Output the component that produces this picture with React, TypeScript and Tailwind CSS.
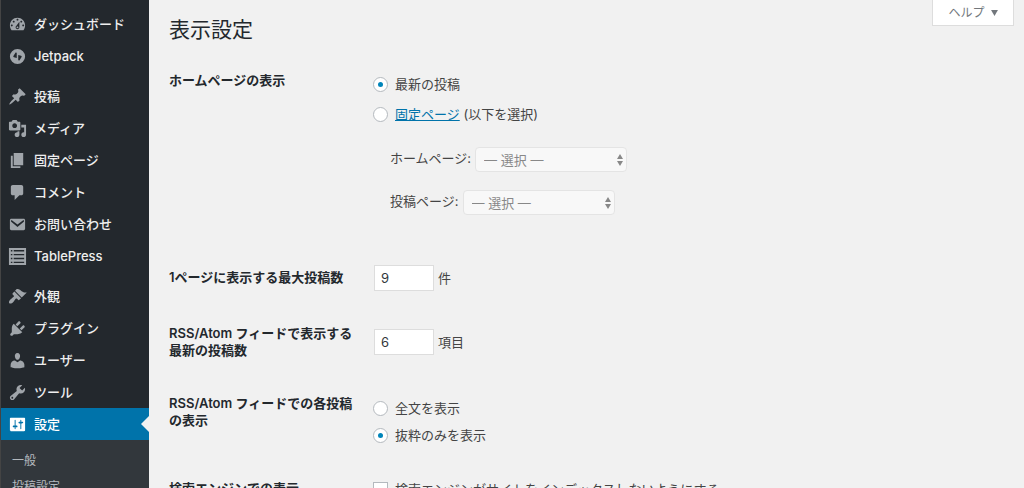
import React from "react";

interface MenuItem {
  label: string;
  icon: string;
  current?: boolean;
}

const MENU_GROUPS: MenuItem[][] = [
  [
    {
      label: "ダッシュボード",
      icon: "M3.76 16h12.48c1.1-1.37 1.76-3.11 1.76-5 0-4.42-3.58-8-8-8s-8 3.58-8 8c0 1.89.66 3.63 1.76 5zM10 4c.55 0 1 .45 1 1s-.45 1-1 1-1-.45-1-1 .45-1 1-1zM6 6c.55 0 1 .45 1 1s-.45 1-1 1-1-.45-1-1 .45-1 1-1zm8 0c.55 0 1 .45 1 1s-.45 1-1 1-1-.45-1-1 .45-1 1-1zm-5.37 5.55L12 7v6c0 1.1-.9 2-2 2s-2-.9-2-2c0-.57.24-1.08.63-1.45zM4 10c.55 0 1 .45 1 1s-.45 1-1 1-1-.45-1-1 .45-1 1-1zm12 0c.55 0 1 .45 1 1s-.45 1-1 1-1-.45-1-1 .45-1 1-1zm-5 3c0-.55-.45-1-1-1s-1 .45-1 1 .45 1 1 1 1-.45 1-1z",
    },
    {
      label: "Jetpack",
      icon: "M10 2a8 8 0 1 0 0 16 8 8 0 0 0 0-16zM9.200 11.700l-2.900-.8c-.7-.2-.9-.8-.6-1.400L8 5.700l1.200.3zM10.800 8.300l2.900.8c.7.2.9.8.6 1.400L12 14.300l-1.200-.3z",
    },
  ],
  [
    {
      label: "投稿",
      icon: "M10.44 3.02l1.82-1.82 6.36 6.35-1.83 1.82c-1.05-.68-2.48-.57-3.41.36l-.75.75c-.92.93-1.04 2.35-.35 3.41l-1.83 1.82-2.41-2.41-2.8 2.79c-.42.42-3.38 2.71-3.8 2.29s1.86-3.39 2.28-3.81l2.79-2.79L4.1 9.36l1.83-1.82c1.05.69 2.48.57 3.4-.36l.75-.75c.93-.92 1.05-2.35.36-3.41z",
    },
    {
      label: "メディア",
      icon: "M13 11V4c0-.55-.45-1-1-1h-1.67L9 1H5L3.67 3H2c-.55 0-1 .45-1 1v7c0 .55.45 1 1 1h10c.55 0 1-.45 1-1zM7 4.5c1.38 0 2.5 1.12 2.5 2.5S8.38 9.5 7 9.5 4.5 8.38 4.5 7 5.62 4.5 7 4.5zM14 6h5v10.5c0 1.38-1.12 2.5-2.5 2.5S14 17.88 14 16.5s1.12-2.5 2.5-2.5c.17 0 .34.02.5.05V9h-3V6zm-4 8.05V13h2v3.5c0 1.38-1.12 2.5-2.5 2.5S7 17.88 7 16.5 8.12 14 9.5 14c.17 0 .34.02.5.05z",
    },
    {
      label: "固定ページ",
      icon: "M6 15V2h10v13H6zm-1 1h8v2H3V5h2v11z",
    },
    {
      label: "コメント",
      icon: "M5 2h9c1.1 0 2 .9 2 2v7c0 1.1-.9 2-2 2h-2l-5 5v-5H5c-1.1 0-2-.9-2-2V4c0-1.1.9-2 2-2z",
    },
    {
      label: "お問い合わせ",
      icon: "M3.5 4h13c.8 0 1.500.7 1.500 1.500v9c0 .8-.7 1.500-1.500 1.500h-13c-.8 0-1.500-.7-1.500-1.500v-9C2 4.700 2.700 4 3.500 4zM10 12.500l6.600-5.500c.4-.4.500-.9.2-1.300-.3-.3-.8-.3-1.200 0L10 10.100 4.400 5.700c-.4-.3-.9-.3-1.200 0-.3.4-.2.9.2 1.300z",
    },
    {
      label: "TablePress",
      icon: "M1 1h18v18H1zM3 3.200v1.500h1.600V3.200zM6 3.200v1.500h11V3.200zM3 7.300v1.500h1.600V7.300zM6 7.300v1.500h11V7.300zM3 11.300v1.500h1.600v-1.500zM6 11.300v1.500h11v-1.500zM3 15.400v1.500h1.600v-1.500zM6 15.400v1.500h11v-1.500z",
    },
  ],
  [
    {
      label: "外観",
      icon: "M14.48 11.06L7.41 3.99l1.5-1.5c.5-.56 2.3-.47 3.51.32 1.21.8 1.43 1.28 2.91 2.1 1.18.64 2.45 1.26 4.45.85zm-.71.71L6.7 4.7 4.93 6.47c-.39.39-.39 1.02 0 1.41l1.06 1.06c.39.39.39 1.03 0 1.42-.6.6-1.43 1.11-2.21 1.69-.35.26-.7.53-1.01.84C1.43 14.23.4 16.08 1.4 17.07c.99 1 2.84-.03 4.18-1.36.31-.31.58-.66.85-1.02.57-.78 1.08-1.61 1.69-2.21.39-.39 1.02-.39 1.41 0l1.06 1.06c.39.39 1.02.39 1.41 0z",
    },
    {
      label: "プラグイン",
      icon: "M13.11 4.36L9.87 7.6 8 5.73l3.24-3.24c.35-.34 1.05-.2 1.56.32.52.51.66 1.21.31 1.55zm-8 1.77l.91-1.12 9.01 9.01-1.19.84c-.71.71-2.63 1.16-3.82 1.16H6.14L4.9 17.26c-.59.59-1.54.59-2.12 0-.59-.58-.59-1.53 0-2.12L4 13.9v-3.88c0-1.13.4-3.19 1.11-3.89zm7.26 3.97l3.24-3.24c.34-.35 1.04-.21 1.55.31.52.51.66 1.21.31 1.55l-3.24 3.25z",
    },
    {
      label: "ユーザー",
      icon: "M10 9.25c-2.27 0-2.73-3.44-2.73-3.44C7 4.02 7.82 2 9.97 2c2.16 0 2.98 2.02 2.71 3.81 0 0-.41 3.44-2.68 3.44zm0 2.57L12.72 10c2.39 0 4.52 2.33 4.52 4.53v2.49s-3.65 1.13-7.24 1.13c-3.65 0-7.24-1.13-7.24-1.13v-2.49c0-2.25 1.94-4.48 4.47-4.48z",
    },
    {
      label: "ツール",
      icon: "M16.68 9.77c-1.34 1.34-3.3 1.67-4.95.99l-5.41 6.52c-.99.99-2.59.99-3.58 0s-.99-2.59 0-3.57l6.52-5.42c-.68-1.65-.35-3.61.99-4.95 1.28-1.28 3.12-1.62 4.72-1.06l-2.89 2.89 2.82 2.82 2.86-2.87c.53 1.58.18 3.39-1.08 4.65zM3.81 16.21c.4.39 1.04.39 1.43 0 .4-.4.4-1.04 0-1.43-.39-.4-1.03-.4-1.43 0-.39.39-.39 1.03 0 1.43z",
    },
    {
      label: "設定",
      current: true,
      icon: "M18 16V4c0-.55-.45-1-1-1H3c-.55 0-1 .45-1 1v12c0 .55.45 1 1 1h14c.55 0 1-.45 1-1zM8 11h1c.55 0 1 .45 1 1s-.45 1-1 1H8v1.5c0 .28-.22.5-.5.5s-.5-.22-.5-.5V13H6c-.55 0-1-.45-1-1s.45-1 1-1h1V5.5c0-.28.22-.5.5-.5s.5.22.5.5V11zm5-2h-1c-.55 0-1-.45-1-1s.45-1 1-1h1V5.5c0-.28.22-.5.5-.5s.5.22.5.5V7h1c.55 0 1 .45 1 1s-.45 1-1 1h-1v5.5c0 .28-.22.5-.5.5s-.5-.22-.5-.5V9z",
    },
  ],
];

const SUBMENU = ["一般", "投稿設定"];

const SidebarLink: React.FC<{ item: MenuItem }> = ({ item }) => (
  <li className="relative">
    <a
      href="#"
      className={`flex h-8 items-center gap-[7px] pl-[7px] font-medium ${
        item.current ? "bg-[#0073aa] text-white" : "text-[#eee]"
      }`}
    >
      <svg
        viewBox="0 0 20 20"
        fill="currentColor"
        fillRule="evenodd"
        aria-hidden="true"
        className={`size-[19px] shrink-0 ${item.current ? "text-white" : "text-[#a0a5aa]"}`}
      >
        <path d={item.icon} />
      </svg>
      {item.label}
    </a>
    {item.current && (
      <span className="absolute top-2 right-0 border-y-8 border-r-8 border-y-transparent border-r-[#f1f1f1]" />
    )}
  </li>
);

const Sidebar: React.FC = () => (
  <nav className="flex w-[149px] shrink-0 flex-col border-l border-[#444] bg-[#23282d] pt-2 leading-[18px]">
    <div className="flex flex-col gap-2">
      {MENU_GROUPS.map((group) => (
        <ul key={group[0].label}>
          {group.map((item) => (
            <SidebarLink key={item.label} item={item} />
          ))}
        </ul>
      ))}
    </div>
    <ul className="flex flex-1 flex-col gap-2 bg-[#32373c] py-3 pl-[11px] text-xs leading-[18px] text-[#b4b9be]">
      {SUBMENU.map((label) => (
        <li key={label}>
          <a href="#">{label}</a>
        </li>
      ))}
    </ul>
  </nav>
);

interface RadioProps {
  id: string;
  name: string;
  defaultChecked?: boolean;
  children: React.ReactNode;
}

const Radio: React.FC<RadioProps> = ({ id, name, defaultChecked, children }) => (
  <div className="flex items-center gap-[7px]">
    <input
      type="radio"
      id={id}
      name={name}
      defaultChecked={defaultChecked}
      className="grid size-[15px] appearance-none place-items-center rounded-full border border-[#b4b9be] bg-white before:size-[5px] before:rounded-full checked:before:bg-[#0085ba]"
    />
    <label htmlFor={id}>{children}</label>
  </div>
);

const PageSelect: React.FC<{ id: string; label: string }> = ({ id, label }) => (
  <div className="flex items-start gap-1">
    <label htmlFor={id} className="leading-[22px]">
      {label}
    </label>
    <div className="relative">
      <select
        id={id}
        disabled
        className="block h-[25px] w-[152px] appearance-none rounded-sm border border-[#e4e4e4] bg-[#f8f8f8] pl-2 text-[#888]"
      >
        <option>— 選択 —</option>
      </select>
      <svg
        viewBox="0 0 6 12"
        fill="#888"
        aria-hidden="true"
        className="absolute top-[7px] right-1 h-3 w-[6px]"
      >
        <path d="M3 0l3 5H0zM3 12l3-5H0z" />
      </svg>
    </div>
  </div>
);

const NumberField: React.FC<{ id: string; value: number; unit: string }> = ({ id, value, unit }) => (
  <div className="flex items-center gap-1 pl-px">
    <input
      type="text"
      inputMode="numeric"
      id={id}
      defaultValue={value}
      className="h-[26px] w-[60px] border border-[#ddd] bg-white px-1.5 text-[13px] text-[#32373c]"
    />
    <span>{unit}</span>
  </div>
);

const HEADING = "w-[184px] shrink-0 font-semibold leading-[17px] text-[#23282d]";

const App: React.FC = () => {
  return (
    <div className="flex h-screen overflow-hidden bg-[#f1f1f1] font-[Inter,'Noto_Sans_CJK_JP',sans-serif] text-[13px] leading-[18px] text-[#444]">
      <Sidebar />
      <main className="min-w-0 flex-1 pr-[10px] pl-5">
        <div className="flex items-start justify-between">
          <h1 className="pt-4 text-[21px] leading-7 text-[#23282d]">表示設定</h1>
          <button
            type="button"
            className="flex h-[26px] w-[82px] items-center justify-center gap-1.5 border border-t-0 border-[#ddd] bg-white text-xs text-[#72777c]"
          >
            ヘルプ
            <svg viewBox="0 0 8 7" fill="currentColor" aria-hidden="true" className="h-[6px] w-[7px]">
              <path d="M0 0h8L4 7z" />
            </svg>
          </button>
        </div>

        <form className="whitespace-nowrap">
          <div className="flex gap-5 pt-7">
            <div className={HEADING}>ホームページの表示</div>
            <div className="pt-[3px]">
              <div className="flex flex-col gap-3">
                <Radio id="front-posts" name="show-on-front" defaultChecked>
                  最新の投稿
                </Radio>
                <Radio id="front-page" name="show-on-front">
                  <a href="#" className="text-[#0073aa] underline">
                    固定ページ
                  </a>{" "}
                  (以下を選択)
                </Radio>
              </div>
              <div className="flex flex-col gap-[18px] pt-6 pl-[17px]">
                <PageSelect id="page-on-front" label="ホームページ:" />
                <PageSelect id="page-for-posts" label="投稿ページ:" />
              </div>
            </div>
          </div>

          <div className="flex gap-5 pt-[50px]">
            <label htmlFor="posts-per-page" className={`${HEADING} pt-1`}>
              1ページに表示する最大投稿数
            </label>
            <NumberField id="posts-per-page" value={9} unit="件" />
          </div>

          <div className="flex items-center gap-5 pt-[34px]">
            <label htmlFor="posts-per-rss" className={HEADING}>
              RSS/Atom フィードで表示する
              <br />
              最新の投稿数
            </label>
            <NumberField id="posts-per-rss" value={6} unit="項目" />
          </div>

          <div className="flex gap-5 pt-9">
            <div className={HEADING}>
              RSS/Atom フィードでの各投稿
              <br />
              の表示
            </div>
            <div className="flex flex-col gap-[9px] pt-1">
              <Radio id="rss-full" name="rss-use-excerpt">
                全文を表示
              </Radio>
              <Radio id="rss-excerpt" name="rss-use-excerpt" defaultChecked>
                抜粋のみを表示
              </Radio>
            </div>
          </div>

          <div className="flex gap-5 pt-9">
            <div className={HEADING}>検索エンジンでの表示</div>
            <div className="flex items-center gap-[7px]">
              <input
                type="checkbox"
                id="blog-public"
                className="size-[15px] appearance-none border border-[#b4b9be] bg-white"
              />
              <label htmlFor="blog-public">検索エンジンがサイトをインデックスしないようにする</label>
            </div>
          </div>
        </form>
      </main>
    </div>
  );
};

export default App;
